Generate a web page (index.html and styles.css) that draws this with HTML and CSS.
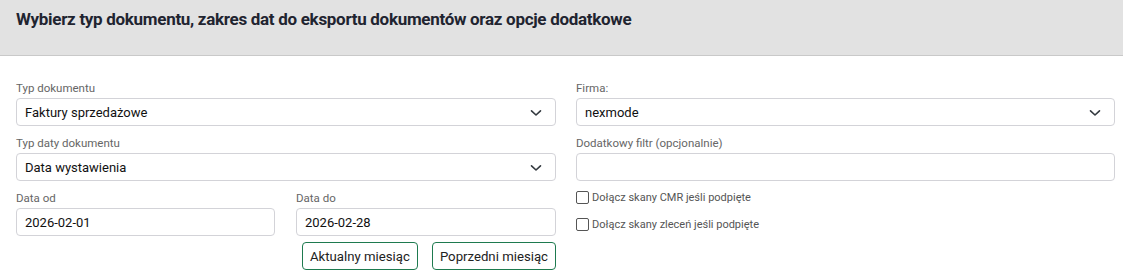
FILE: index.html
```html
<!DOCTYPE html>
<html lang="pl">
<head>
<meta charset="utf-8">
<link rel="stylesheet" href="styles.css">
</head>
<body>
<div class="header">
  <h1 class="title">Wybierz typ dokumentu, zakres dat do eksportu dokumentów oraz opcje dodatkowe</h1>
</div>
<div class="form">
  <div class="col">
    <div class="group">
      <label class="label">Typ dokumentu</label>
      <div class="select">
        <span>Faktury sprzedażowe</span>
        <svg class="chev" width="12" height="8" viewBox="0 0 12 8"><path d="M1.5 1.8 L6 6 L10.5 1.8" fill="none" stroke="#343a40" stroke-width="1.6" stroke-linecap="round" stroke-linejoin="round"/></svg>
      </div>
    </div>
    <div class="group">
      <label class="label">Typ daty dokumentu</label>
      <div class="select">
        <span>Data wystawienia</span>
        <svg class="chev" width="12" height="8" viewBox="0 0 12 8"><path d="M1.5 1.8 L6 6 L10.5 1.8" fill="none" stroke="#343a40" stroke-width="1.6" stroke-linecap="round" stroke-linejoin="round"/></svg>
      </div>
    </div>
    <div class="dates">
      <div class="group">
        <label class="label">Data od</label>
        <div class="input">2026-02-01</div>
      </div>
      <div class="group">
        <label class="label">Data do</label>
        <div class="input">2026-02-28</div>
        <div class="buttons">
          <button class="btn">Aktualny miesiąc</button>
          <button class="btn">Poprzedni miesiąc</button>
        </div>
      </div>
    </div>
  </div>
  <div class="col">
    <div class="group">
      <label class="label">Firma:</label>
      <div class="select">
        <span>nexmode</span>
        <svg class="chev" width="12" height="8" viewBox="0 0 12 8"><path d="M1.5 1.8 L6 6 L10.5 1.8" fill="none" stroke="#343a40" stroke-width="1.6" stroke-linecap="round" stroke-linejoin="round"/></svg>
      </div>
    </div>
    <div class="group">
      <label class="label">Dodatkowy filtr (opcjonalnie)</label>
      <div class="input"></div>
    </div>
    <label class="check"><span class="box"></span>Dołącz skany CMR jeśli podpięte</label>
    <label class="check"><span class="box"></span>Dołącz skany zleceń jeśli podpięte</label>
  </div>
</div>
</body>
</html>
```

FILE: styles.css
```css
* { box-sizing: border-box; }
body {
  margin: 0;
  font-family: Roboto, "Liberation Sans", Arial, sans-serif;
  background: #fff;
  color: #212529;
}
.header {
  background: #e2e2e2;
  border-bottom: 1px solid #c9c9c9;
  height: 56px;
  padding: 8px 16px 0;
}
.title {
  margin: 0;
  font-size: 17px;
  font-weight: 700;
  color: #1f2430;
  letter-spacing: -0.3px;
  line-height: 22px;
}
.form {
  display: grid;
  grid-template-columns: 540px 539px;
  column-gap: 20px;
  padding: 24px 8px 0 16px;
}
.col {
  display: flex;
  flex-direction: column;
  gap: 9px;
}
.group {
  display: flex;
  flex-direction: column;
}
.label {
  font-size: 11.5px;
  line-height: 16px;
  height: 18px;
  color: #666;
}
.select, .input {
  height: 28px;
  border: 1px solid #d3d3d8;
  border-radius: 4px;
  background: #fff;
  padding: 0 9px 0 8px;
  font-size: 13px;
  color: #111;
  display: flex;
  align-items: center;
  justify-content: space-between;
}
.chev { margin-right: 4px; margin-top: 1px; }
.dates {
  display: grid;
  grid-template-columns: 259px 260px;
  column-gap: 21px;
}
.buttons {
  display: flex;
  justify-content: flex-end;
  gap: 14px;
  margin-top: 6px;
}
.btn {
  height: 28px;
  padding: 0 7px;
  border: 1px solid #1e7a4f;
  border-radius: 4px;
  background: #fff;
  font-family: Roboto, "Liberation Sans", Arial, sans-serif;
  font-size: 13.2px;
  color: #222;
}
.check {
  display: flex;
  align-items: center;
  font-size: 11px;
  color: #555;
  height: 18px;
  margin-top: -2px;
}
.check + .check { margin-top: 0; }
.box {
  width: 13px;
  height: 13px;
  border: 1px solid #555;
  border-radius: 2px;
  margin-right: 3px;
  background: #fff;
}
```
